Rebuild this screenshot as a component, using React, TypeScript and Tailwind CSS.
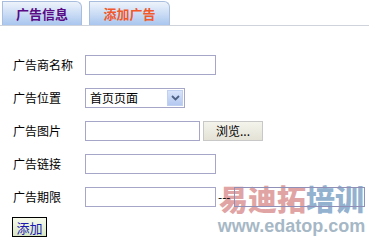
import React from "react";

const font = { fontFamily: '"Noto Sans CJK SC", "Noto Sans", sans-serif' };

function Label({ children }: { children: React.ReactNode }) {
  return <div className="w-[85px] shrink-0 pl-[13px] text-[12px] leading-[20px] text-black whitespace-nowrap">{children}</div>;
}

function TextBox({ w = "w-[131px]" }: { w?: string }) {
  return <div className={`${w} shrink-0 h-[20px] border border-[#a6a6c8] bg-transparent`} />;
}

export default function App() {
  return (
    <div className="relative w-[369px] h-[244px] bg-white overflow-hidden" style={font}>
      <div className="absolute left-[214px] top-[180px] w-[155px] flex flex-col items-center pointer-events-none">
        <div className="text-[29px] font-black leading-[36px]">
          <span className="text-[#e0a4a4]">易迪拓</span>
          <span className="text-[#93b2d0]">培训</span>
        </div>
        <div className="text-[18px] font-bold leading-[20px] text-[#a6b8c6]" style={{ fontFamily: '"Liberation Sans", sans-serif' }}>
          www.edatop.com
        </div>
      </div>

      <div className="relative flex items-end gap-[7px] pl-[2px] pt-[1px] h-[26px] border-b border-[#cfd4dc]">
        <div className="w-[80px] h-[24px] rounded-tr-[6px] border border-b-0 border-[#a9bedf] bg-gradient-to-b from-[#eef3fb] to-[#a9c6ee] flex items-center justify-center text-[13px] font-bold text-[#5a0a84]">
          广告信息
        </div>
        <div className="w-[81px] h-[24px] rounded-tr-[6px] border border-b-0 border-[#a9bedf] bg-gradient-to-b from-[#eef3fb] to-[#a9c6ee] flex items-center justify-center text-[13px] font-bold text-[#f2582a]">
          添加广告
        </div>
      </div>

      <div className="relative flex flex-col gap-[13px] pt-[29px]">
        <div className="flex items-center">
          <Label>广告商名称</Label>
          <TextBox />
        </div>
        <div className="flex items-center">
          <Label>广告位置</Label>
          <div className="w-[100px] shrink-0 h-[20px] border border-[#a6a6c8] bg-white flex items-center justify-between pl-[4px] pr-[1px]">
            <span className="text-[12px] leading-none">首页页面</span>
            <div className="w-[16px] h-[16px] bg-gradient-to-b from-[#d8e4fa] to-[#b4c8f0] border border-[#c0d0f0] flex items-center justify-center">
              <svg width="9" height="6" viewBox="0 0 9 6">
                <path d="M1 1 L4.5 4.5 L8 1" stroke="#4d6185" strokeWidth="1.8" fill="none" />
              </svg>
            </div>
          </div>
        </div>
        <div className="flex items-center">
          <Label>广告图片</Label>
          <TextBox w="w-[115px]" />
          <div className="ml-[3px] shrink-0 w-[60px] h-[20px] border border-[#c8c8c8] bg-gradient-to-b from-[#f4f4ec] to-[#e4e2d6] flex items-center justify-center text-[12px] leading-none">
            浏览...
          </div>
        </div>
        <div className="flex items-center">
          <Label>广告链接</Label>
          <TextBox />
        </div>
        <div className="flex items-center">
          <Label>广告期限</Label>
          <TextBox />
          <span className="shrink-0 w-[18px] pl-[2px] text-[12px] leading-none text-black">---</span>
          <div className="w-[131px] shrink-0 h-[20px] border border-[#8f8fb8]" />
        </div>
      </div>

      <div className="relative mt-[10px] ml-[12px] w-[35px] h-[20px] border border-black bg-gradient-to-b from-[#f6faec] to-[#d8e6c4] flex items-center justify-center text-[13px] leading-none text-[#1a1ab0]">
        添加
      </div>
    </div>
  );
}
